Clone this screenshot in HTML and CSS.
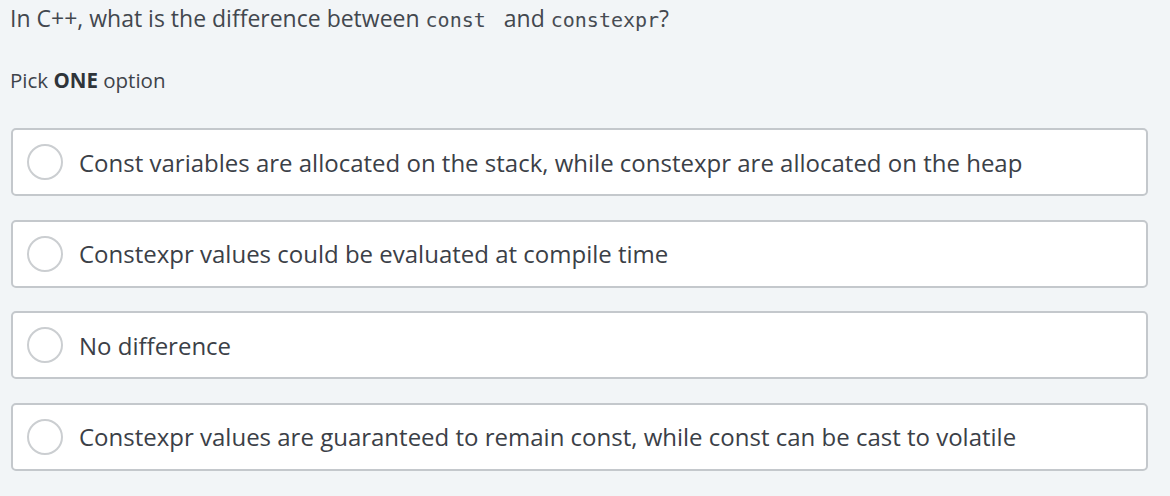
FILE: index.html
```html
<!DOCTYPE html>
<html>
<head>
<meta charset="utf-8">
<link rel="stylesheet" href="styles.css">
</head>
<body>
<main class="question">
  <p class="prompt">In C++, what is the difference between <code>const&nbsp;</code> and <code>constexpr</code>?</p>
  <p class="hint">Pick <strong>ONE</strong> option</p>
  <div class="options">
    <label class="option"><span class="radio"></span><span class="label">Const variables are allocated on the stack, while constexpr are allocated on the heap</span></label>
    <label class="option"><span class="radio"></span><span class="label">Constexpr values could be evaluated at compile time</span></label>
    <label class="option"><span class="radio"></span><span class="label">No difference</span></label>
    <label class="option"><span class="radio"></span><span class="label">Constexpr values are guaranteed to remain const, while const can be cast to volatile</span></label>
  </div>
</main>
</body>
</html>
```
FILE: styles.css
```css
html, body {
  margin: 0;
  padding: 0;
  background: #f2f5f7;
}
body {
  font-family: "Open Sans", "Liberation Sans", sans-serif;
  color: #3e434a;
}
.question {
  padding: 3px 22px 0 10px;
}
.prompt {
  margin: 0;
  font-size: 23px;
  line-height: 30px;
  color: #42474e;
}
.prompt code {
  font-family: "DejaVu Sans Mono", monospace;
  font-size: 20px;
  color: #474c53;
}
.hint {
  margin: 31px 0 0;
  font-size: 20.5px;
  line-height: 28px;
}
.hint strong {
  font-weight: 700;
  color: #2f343a;
}
.options {
  margin-top: 34px;
  display: flex;
  flex-direction: column;
  gap: 23.5px;
}
.option {
  display: flex;
  align-items: center;
  gap: 16px;
  height: 64px;
  margin-left: 1px;
  padding: 0 14px;
  background: #ffffff;
  border: 2px solid #c4c8cc;
  border-radius: 5px;
}
.radio {
  flex: none;
  width: 36px;
  height: 36px;
  border: 2px solid #cbced1;
  border-radius: 50%;
  box-sizing: border-box;
}
.label {
  font-size: 24px;
  color: #3b4047;
}
```
